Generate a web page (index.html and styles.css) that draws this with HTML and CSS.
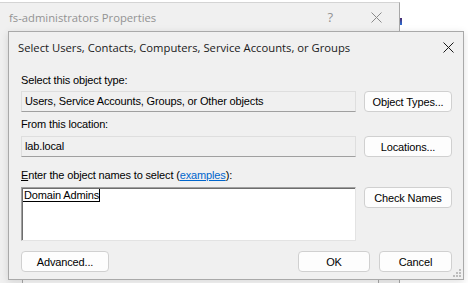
FILE: index.html
```html
<!DOCTYPE html>
<html lang="en">
<head>
  <meta charset="UTF-8" />
  <title>Select Users, Contacts, Computers, Service Accounts, or Groups</title>
  <link rel="stylesheet" href="styles.css">
</head>
<body>

  <div class="desk">

    <div class="bgwin">
      <div class="bgwin-title">
        <span class="bgwin-name">fs-administrators Properties</span>
        <span class="bgwin-help">?</span>
        <svg class="bgwin-close" width="11" height="11" viewBox="0 0 11 11">
          <path d="M0.5 0.5 L10.5 10.5 M10.5 0.5 L0.5 10.5" stroke="#8a8a8a" stroke-width="1" fill="none"/>
        </svg>
      </div>
      <div class="bgwin-list"></div>
    </div>

    <div class="behind">
      <span class="behind-mark"></span>
    </div>

    <div class="dialog">
      <div class="dialog-title">
        <span class="dialog-name">Select Users, Contacts, Computers, Service Accounts, or Groups</span>
        <svg class="dialog-close" width="11" height="11" viewBox="0 0 11 11">
          <path d="M0.5 0.5 L10.5 10.5 M10.5 0.5 L0.5 10.5" stroke="#1a1a1a" stroke-width="1" fill="none"/>
        </svg>
      </div>

      <div class="dialog-body">
        <div class="lbl">Select this object type:</div>
        <div class="row">
          <div class="field">Users, Service Accounts, Groups, or Other objects</div>
          <button class="btn">Object Types...</button>
        </div>

        <div class="lbl lbl-near">From this location:</div>
        <div class="row row-loose">
          <div class="field">lab.local</div>
          <button class="btn">Locations...</button>
        </div>

        <div class="lbl"><u>E</u>nter the object names to select (<a href="#" class="link">examples</a>):</div>
        <div class="row row-loose">
          <div class="names"><span class="names-text">Domain Admins</span></div>
          <button class="btn">Check Names</button>
        </div>

        <div class="actions">
          <button class="btn">Advanced...</button>
          <div class="actions-right">
            <button class="btn btn-ok">OK</button>
            <button class="btn btn-cancel">Cancel</button>
          </div>
        </div>
      </div>

      <svg class="grip" width="9" height="9" viewBox="0 0 9 9">
        <rect x="6" y="0" width="2" height="2" fill="#bdbdbd"/>
        <rect x="3" y="3" width="2" height="2" fill="#bdbdbd"/>
        <rect x="6" y="3" width="2" height="2" fill="#bdbdbd"/>
        <rect x="0" y="6" width="2" height="2" fill="#bdbdbd"/>
        <rect x="3" y="6" width="2" height="2" fill="#bdbdbd"/>
        <rect x="6" y="6" width="2" height="2" fill="#bdbdbd"/>
      </svg>
    </div>

  </div>

</body>
</html>
```

FILE: styles.css
```css
body {
  margin: 0;
  background: #ffffff;
  font-family: "Liberation Sans", Arial, sans-serif;
}

.desk {
  position: relative;
  display: flex;
  width: 468px;
  height: 283px;
  overflow: hidden;
}

/* window behind the dialog */
.bgwin {
  width: 400px;
  height: 290px;
  margin-top: 2px;
  box-sizing: border-box;
  background: #f0f0f0;
  border-top: 1px solid #d4d4d4;
  border-right: 1px solid #a8a8a8;
}

.bgwin-title {
  display: flex;
  align-items: center;
  height: 28px;
  padding-left: 9px;
  font-family: "Open Sans", "Noto Sans", sans-serif;
  font-size: 11.25px;
  color: #939393;
}

.bgwin-name {
  flex: 1;
}

.bgwin-help {
  margin-right: 38px;
  font-size: 13px;
}

.bgwin-close {
  margin-right: 17px;
}

.bgwin-list {
  margin: 30px 0 0 22px;
  width: 357px;
  height: 300px;
  box-sizing: border-box;
  border-left: 1px solid #a8a8a8;
  border-right: 1px solid #a8a8a8;
  background: #f7f7f7;
}

.behind {
  flex: 1;
}

.behind-mark {
  display: block;
  width: 2px;
  height: 7px;
  margin-top: 18px;
  background: linear-gradient(#4b2a6e, #2b6fd6);
}

/* dialog */
.dialog {
  position: absolute;
  left: 8px;
  top: 31px;
  width: 456px;
  height: 249px;
  box-sizing: border-box;
  background: #f0f0f0;
  border: 1px solid #a9a9a9;
  box-shadow: 0 2px 8px rgba(0,0,0,0.12);
}

.dialog-title {
  display: flex;
  align-items: center;
  height: 30px;
  padding: 0 9px 0 9px;
  font-family: "Open Sans", "Noto Sans", sans-serif;
  font-size: 11.25px;
  color: #1a1a1a;
}

.dialog-name {
  flex: 1;
}

.dialog-body {
  padding: 0 11px 0 12px;
  font-size: 11px;
  letter-spacing: -0.15px;
  color: #000;
}

.lbl {
  margin-top: 12px;
  line-height: 13px;
}

.lbl-near {
  margin-top: 6px;
}

.link {
  color: #0066cc;
}

.row {
  display: flex;
  align-items: flex-start;
  gap: 8px;
  margin-top: 4px;
}

.row-loose {
  margin-top: 5px;
}

.field {
  width: 335px;
  height: 21px;
  box-sizing: border-box;
  padding: 0 3px;
  line-height: 19px;
  background: #f0f0f0;
  border: 1px solid #dedede;
  border-bottom-color: #a0a0a0;
}

.names {
  width: 335px;
  height: 54px;
  box-sizing: border-box;
  padding: 1px 1px;
  line-height: 13px;
  background: #ffffff;
  border: 1px solid #e3e3e3;
  border-top-color: #a0a0a0;
  border-left-color: #a0a0a0;
  box-shadow: inset 1px 1px 0 #6d6d6d;
}

.names-text {
  display: inline-block;
  padding-left: 1px;
  line-height: 11px;
  padding-top: 1px;
  border-bottom: 1px solid #000;
  border-right: 1px solid #000;
}

.btn {
  width: 88px;
  height: 21px;
  padding: 0;
  font-family: inherit;
  font-size: 11px;
  letter-spacing: -0.15px;
  color: #000;
  background: #fdfdfd;
  border: 1px solid #d0d0d0;
  border-radius: 4px;
}

.actions {
  display: flex;
  justify-content: space-between;
  margin-top: 10px;
}

.actions-right {
  display: flex;
  gap: 9px;
}

.btn-ok {
  width: 72px;
}

.btn-cancel {
  width: 73px;
}

.grip {
  position: absolute;
  right: 1px;
  bottom: 1px;
}
```
